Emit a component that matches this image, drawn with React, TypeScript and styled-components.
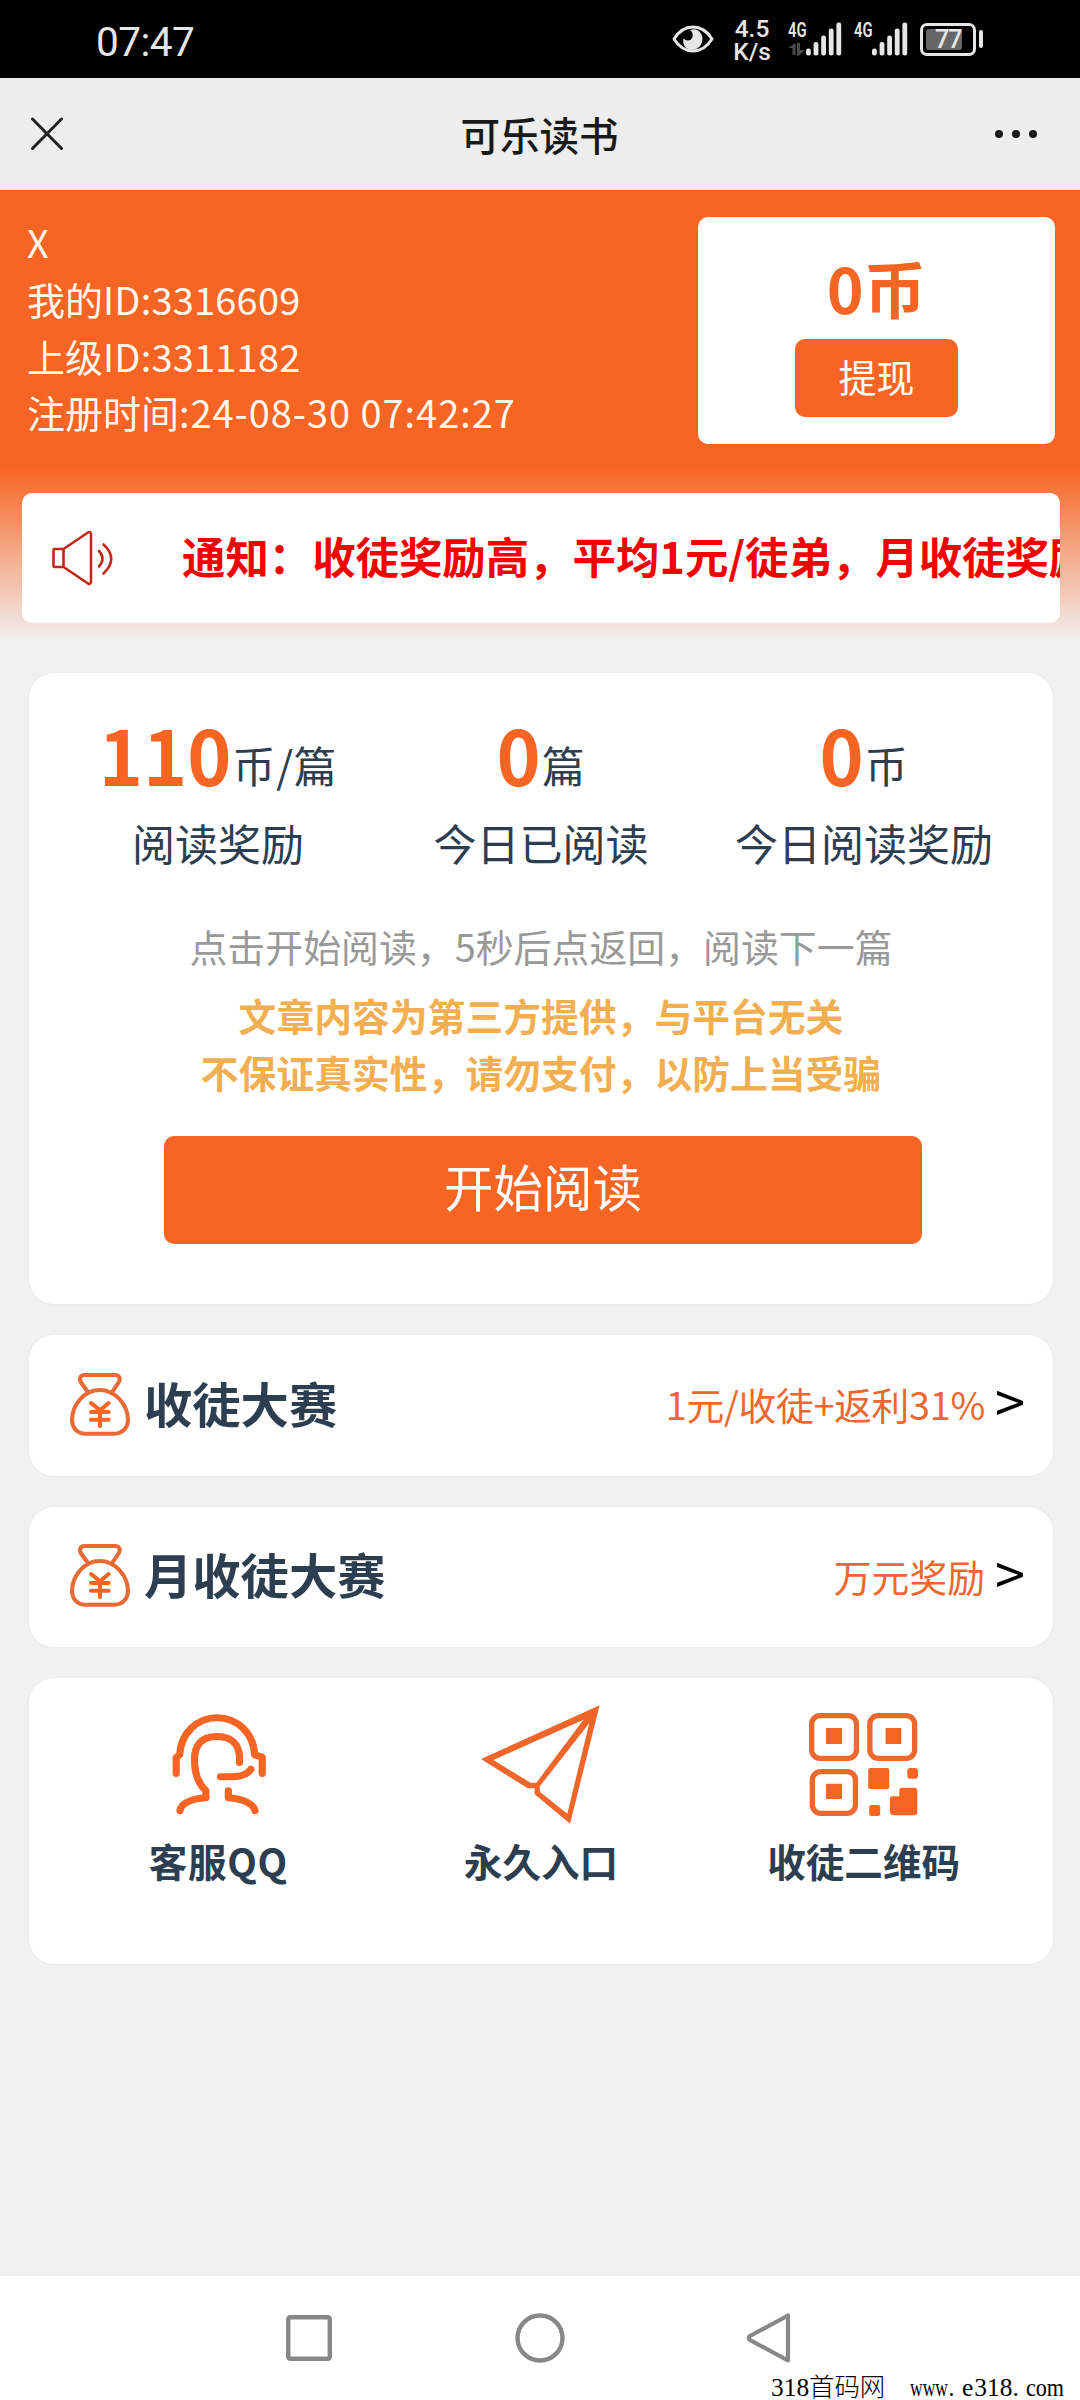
import React from "react";
import styled, { createGlobalStyle } from "styled-components";

const ORANGE = "#f66524";
const NAVY = "#2c3e50";

const GlobalStyle = createGlobalStyle`
  *, *::before, *::after { box-sizing: border-box; }
  body {
    margin: 0;
    background: #f1f1f1;
    font-family: "Noto Sans CJK SC", "Noto Sans", sans-serif;
  }
  svg { flex: none; }
`;

const Phone = styled.div`
  width: 1080px;
  height: 2400px;
  display: flex;
  flex-direction: column;
  overflow: hidden;
  background: #f1f1f1;
`;

/* ---------- status bar ---------- */

const StatusBar = styled.header`
  height: 78px;
  flex: none;
  padding: 0 97px 0 96px;
  display: flex;
  align-items: center;
  justify-content: space-between;
  background: #000;
  color: #e6e6e6;
  font-family: Roboto, "Noto Sans", sans-serif;
`;

const Clock = styled.time`
  font-size: 40.5px;
  font-weight: 400;
  line-height: 48px;
  letter-spacing: -0.5px;
  padding-top: 5px;
`;

const StatusIcons = styled.div`
  display: flex;
  align-items: center;
`;

const NetSpeed = styled.div`
  width: 38px;
  margin: 0 17px 0 19px;
  display: flex;
  flex-direction: column;
  align-items: center;
  font-size: 24.5px;
  font-weight: 500;
  line-height: 23px;
  padding-top: 1px;
`;

const Signal = styled.div`
  display: flex;
  align-items: flex-start;
  width: 54px;
  height: 34px;
  margin-right: 12px;
`;

const NetType = styled.div`
  width: 18px;
  display: flex;
  flex-direction: column;
  gap: 5px;
`;

const NetLabel = styled.span`
  display: block;
  width: 26px;
  font-size: 20px;
  font-weight: 600;
  line-height: 16px;
  transform: scaleX(0.74);
  transform-origin: left;
`;

const Battery = styled.div`
  width: 56px;
  height: 33px;
  padding: 3px;
  border: 3px solid #e6e6e6;
  border-radius: 7px;
`;

const BatteryLevel = styled.div`
  width: 36px;
  height: 21px;
  padding-left: 9px;
  border-radius: 3px;
  background: #666;
  font-size: 25px;
  font-weight: 500;
  line-height: 22px;
  letter-spacing: -1px;
`;

const BatteryTip = styled.div`
  width: 4px;
  height: 18px;
  margin-left: 3px;
  border-radius: 2px;
  background: #e6e6e6;
`;

/* ---------- title bar ---------- */

const TitleBar = styled.nav`
  height: 112px;
  flex: none;
  padding: 0 43px 0 30px;
  display: grid;
  grid-template-columns: 1fr auto 1fr;
  align-items: center;
  background: #ededed;
  color: #191919;
`;

const Title = styled.h1`
  margin: 0;
  font-size: 39.5px;
  font-weight: 500;
  line-height: 60px;
  padding-left: 12px;
`;

const Dots = styled.div`
  display: flex;
  justify-content: flex-end;
  gap: 8.5px;
`;

const Dot = styled.i`
  width: 8.5px;
  height: 8.5px;
  border-radius: 50%;
  background: #191919;
`;

/* ---------- orange header ---------- */

const Hero = styled.section`
  height: 483px;
  flex: none;
  padding-top: 27px;
  background: linear-gradient(${ORANGE} 0, ${ORANGE} 278px, #f1f1f1 452px);
`;

const Profile = styled.div`
  height: 227px;
  padding: 0 25px 0 27px;
  display: flex;
  justify-content: space-between;
`;

const UserInfo = styled.div`
  margin-top: -3px;
  color: #fff8ee;
  font-size: 38px;
  line-height: 56.8px;
  white-space: nowrap;
`;

const InfoLine = styled.div<{ $spacing?: number }>`
  span { letter-spacing: ${(p) => p.$spacing ?? 0}px; }
`;

const BalanceCard = styled.div`
  width: 357px;
  height: 227px;
  padding-top: 35px;
  display: flex;
  flex-direction: column;
  align-items: center;
  border-radius: 10px;
  background: #fff;
`;

const Balance = styled.div`
  height: 87px;
  font-size: 62.5px;
  font-weight: 700;
  line-height: 70px;
  color: ${ORANGE};
`;

const WithdrawButton = styled.button`
  width: 163px;
  height: 78px;
  padding: 0 0 5px;
  border: 0;
  border-radius: 10px;
  background: ${ORANGE};
  color: #fff;
  font: 400 38px/72px "Noto Sans CJK SC", sans-serif;
`;

const Notice = styled.div`
  width: 1038px;
  height: 130px;
  margin: 49px 0 0 22px;
  padding-left: 29px;
  display: flex;
  align-items: center;
  overflow: hidden;
  border-radius: 10px;
  background: #fff;
`;

const NoticeText = styled.p`
  margin: 0 0 6px 68px;
  color: #f40000;
  font-size: 43.4px;
  font-weight: 700;
  line-height: 60px;
  white-space: nowrap;
`;

/* ---------- cards ---------- */

const Content = styled.main`
  flex: 1;
  padding: 0 27px 0 29px;
  display: flex;
  flex-direction: column;
  gap: 31px;
`;

const Card = styled.section<{ $height: number }>`
  height: ${(p) => p.$height}px;
  flex: none;
  border-radius: 25px;
  background: #fff;
  box-shadow: 0 0 3px rgba(0, 0, 0, 0.06);
`;

const ReadCard = styled(Card)`
  padding-top: 34px;
  display: flex;
  flex-direction: column;
  align-items: center;
`;

const Stats = styled.div`
  width: 969px;
  height: 209px;
  display: grid;
  grid-template-columns: repeat(3, 1fr);
  color: ${NAVY};
  font-size: 43px;
  text-align: center;
`;

const StatValue = styled.div`
  height: 105px;
  line-height: 94px;
  white-space: nowrap;
`;

const StatNumber = styled.b`
  font-size: 75px;
  font-weight: 700;
  color: ${ORANGE};
`;

const StatUnit = styled.span`
  margin-left: 1px;
  line-height: 40px;
  letter-spacing: 0.6px;
  vertical-align: 3px;
`;

const StatLabel = styled.div`
  line-height: 60px;
`;

const Hint = styled.p`
  margin: 0 0 10px;
  font-size: 37.9px;
  line-height: 60px;
  color: #999;
`;

const Warning = styled.p`
  margin: 0;
  font-size: 37.8px;
  font-weight: 700;
  line-height: 57px;
  color: #f2af52;
  text-align: center;
`;

const StartButton = styled.button`
  width: 758px;
  height: 108px;
  margin: 36px 0 0 4px;
  padding: 0 0 8px;
  border: 0;
  border-radius: 10px;
  background: ${ORANGE};
  color: #fff;
  font: 400 49.5px/100px "Noto Sans CJK SC", sans-serif;
`;

const ContestCard = styled(Card)`
  padding: 0 28px 2px 41px;
  display: flex;
  align-items: center;
`;

const ContestTitle = styled.h2`
  flex: 1;
  margin: 0 0 5px 14px;
  font-size: 48.3px;
  font-weight: 700;
  line-height: 60px;
  color: ${NAVY};
`;

const Reward = styled.span<{ $spacing: number }>`
  font-size: 37.8px;
  line-height: 60px;
  letter-spacing: ${(p) => p.$spacing}px;
  color: #ec682f;
`;

const Chevron = styled.span`
  width: 30px;
  margin: 0 0 8px 10px;
  font-size: 54px;
  font-weight: 400;
  line-height: 60px;
  color: #000;
`;

const LinksCard = styled(Card)`
  padding: 20px 28px 0;
  display: grid;
  grid-template-columns: repeat(3, 1fr);
`;

const LinkItem = styled.a`
  display: flex;
  flex-direction: column;
  align-items: center;
  color: ${NAVY};
  font-size: 38.6px;
  font-weight: 700;
  line-height: 60px;
`;

const LinkIcon = styled.div`
  height: 132px;
  display: flex;
  align-items: center;
`;

const LinkLabel = styled.span<{ $spacing: number }>`
  letter-spacing: ${(p) => p.$spacing}px;
`;

/* ---------- navigation bar ---------- */

const NavBar = styled.footer`
  height: 124px;
  flex: none;
  padding-top: 37px;
  background: #fff;
`;

const NavButtons = styled.div`
  height: 50px;
  padding: 0 289px 0 286px;
  display: flex;
  align-items: center;
  justify-content: space-between;
`;

const Watermark = styled.div`
  height: 37px;
  padding: 10px 0 0 771px;
  display: flex;
  color: #000;
  font-family: "Liberation Serif", "Noto Sans CJK SC", serif;
  font-size: 25.4px;
  font-weight: 300;
  line-height: 28px;
  white-space: pre;
`;

const Site = styled.span`
  display: flex;
  margin-left: 25px;
`;

const Cell = styled.span<{ $width: number; $scale?: number }>`
  display: block;
  width: ${(p) => p.$width}px;
  transform: scaleX(${(p) => p.$scale ?? 1});
  transform-origin: left;
`;

/* ---------- drawings ---------- */

const EyeIcon = () => (
  <svg width="42" height="28" viewBox="0 0 42 28" fill="none">
    <path d="M2 14C12-2 30-2 40 14C30 30 12 30 2 14Z" stroke="#e6e6e6" strokeWidth="3" strokeLinejoin="round" />
    <path d="M18 5C25 2 31 8 30.500 14.500C30 22 24 25 20 25C14 25 10 20 11.500 13C13 16 19 17 20.500 12C21.300 9 20 6.500 18 5Z" fill="#e6e6e6" />
  </svg>
);

const DataArrows = () => (
  <svg width="17" height="13" viewBox="0 0 17 13" fill="#4a4a4a">
    <path d="M4.500 12V5H0L7.500 0V12ZM9 0H12V7L17 7L11 12.500H9Z" />
  </svg>
);

const SignalBars = () => (
  <svg width="36" height="34" viewBox="0 0 36 34" fill="#e6e6e6">
    {[7, 13.5, 20, 27, 33].map((h, i) => (
      <rect key={h} x={i * 7.6} y={33.5 - h} width="4.8" height={h} rx="2.2" />
    ))}
  </svg>
);

const CloseIcon = () => (
  <svg width="34" height="34" viewBox="0 0 34 34" stroke="#222" strokeWidth="3" strokeLinecap="round">
    <path d="M2.500 2L31.500 31.500M31.500 2L2.500 31.500" />
  </svg>
);

const SpeakerIcon = () => (
  <svg width="63" height="56" viewBox="51 529 63 56" fill="none" stroke="#c0281c" strokeWidth="2.6" strokeLinecap="round" strokeLinejoin="round">
    <rect x="53.5" y="548" width="10" height="18" rx="1" />
    <path d="M63.500 548L88 531.500Q91 530 91 533.500V580Q91 584 88 582.500L63.500 566" />
    <path d="M99 550Q106 557.500 99 565.500M103.500 543.500Q119 557.500 103.500 572.500" />
  </svg>
);

const BagIcon = () => (
  <svg width="60" height="63" viewBox="202 189 174 189" preserveAspectRatio="none" fill="none" stroke="#e96a35" strokeWidth="12" strokeLinecap="round" strokeLinejoin="round">
    <path d="M252 243L235 219C227 206 232 195 244 195H333C346 195 350 207 342 219L326 243" />
    <path d="M288 240C333 240 370 284 370 330C370 355 352 371 332 371H246C224 371 208 354 208 330C208 284 244 240 288 240Z" />
    <path d="M263 279L289 301L314 279M263 306H314M263 329H314M289 303V348" stroke="#f66524" />
  </svg>
);

const HeadsetIcon = () => (
  <svg width="94" height="100" viewBox="149 138 272 301" preserveAspectRatio="none" overflow="visible" fill="none" stroke={ORANGE} strokeWidth="21" strokeLinecap="round" strokeLinejoin="round">
    <path d="M164 317V269L174 261C178 195 225 149 282 149C340 149 388 195 391 261L413 268V317" />
    <path d="M347 284C350 240 335 206 282 206C230 206 217 240 217 275C217 325 230 350 250 369V390C215 392 178 405 175 429" />
    <path d="M292 327H320C350 327 372 318 380 304M315 369V390C355 392 388 408 392 429" />
  </svg>
);

const PlaneIcon = () => (
  <svg width="119" height="119" viewBox="1048 104 346 357" preserveAspectRatio="none" fill="#f0652a" fillRule="evenodd">
    <path d="M1048 266L1393 105L1307 460L1204 372V354H1184ZM1084 269L1192 337H1209L1346 148ZM1363 158L1219 348V364L1299 430Z" />
  </svg>
);

const QrIcon = () => (
  <svg width="109" height="103" viewBox="450 126 326 309" preserveAspectRatio="none" fill={ORANGE}>
    <g fill="none" stroke="#ec682f" strokeWidth="16">
      <rect x="458" y="134" width="134" height="128" rx="25" />
      <rect x="632" y="134" width="134" height="128" rx="25" />
      <rect x="460" y="302" width="129" height="125" rx="25" />
    </g>
    <path d="M501 171H549V219H501ZM679 171H726V219H679ZM501 338H549V384H501Z" />
    <rect x="627" y="291" width="63" height="63" rx="6" />
    <rect x="744" y="291" width="32" height="32" rx="9" />
    <rect x="630" y="402" width="33" height="33" rx="7" />
    <path d="M728 350H765Q774 350 774 359V424Q774 433 765 433H704Q692 433 692 421V384Q692 376 700 376H720V358Q720 350 728 350Z" />
  </svg>
);

const RecentIcon = () => (
  <svg width="46" height="46" viewBox="0 0 46 46" fill="none" stroke="#888" strokeWidth="4.4">
    <rect x="2.2" y="2.2" width="41.6" height="41.6" rx="2" />
  </svg>
);

const HomeIcon = () => (
  <svg width="50" height="50" viewBox="-1 0 50 50" overflow="visible" fill="none" stroke="#888" strokeWidth="4.4">
    <circle cx="25" cy="25" r="22.5" />
  </svg>
);

const BackIcon = () => (
  <svg width="45" height="50" viewBox="0 0 45 50" fill="none" stroke="#888" strokeWidth="4.2" strokeLinejoin="round">
    <path d="M42 2.500V47.500L4 27Q1.500 25 4 23Z" />
  </svg>
);

/* ---------- page ---------- */

const stats = [
  { value: "110", unit: "币/篇", label: "阅读奖励" },
  { value: "0", unit: "篇", label: "今日已阅读" },
  { value: "0", unit: "币", label: "今日阅读奖励" },
];

const contests = [
  { title: "收徒大赛", reward: "1元/收徒+返利31%", spacing: -0.3 },
  { title: "月收徒大赛", reward: "万元奖励", spacing: 0 },
];

const links = [
  { icon: <HeadsetIcon />, label: "客服QQ", spacing: 0.6 },
  { icon: <PlaneIcon />, label: "永久入口", spacing: 0 },
  { icon: <QrIcon />, label: "收徒二维码", spacing: 0 },
];

export default function App() {
  return (
    <Phone>
      <GlobalStyle />
      <StatusBar>
        <Clock>07:47</Clock>
        <StatusIcons>
          <EyeIcon />
          <NetSpeed>
            <span>4.5</span>
            <span>K/s</span>
          </NetSpeed>
          {[true, false].map((active) => (
            <Signal key={String(active)}>
              <NetType>
                <NetLabel>4G</NetLabel>
                {active && <DataArrows />}
              </NetType>
              <SignalBars />
            </Signal>
          ))}
          <Battery>
            <BatteryLevel>77</BatteryLevel>
          </Battery>
          <BatteryTip />
        </StatusIcons>
      </StatusBar>

      <TitleBar>
        <CloseIcon />
        <Title>可乐读书</Title>
        <Dots>
          <Dot />
          <Dot />
          <Dot />
        </Dots>
      </TitleBar>

      <Hero>
        <Profile>
          <UserInfo>
            <InfoLine>X</InfoLine>
            <InfoLine $spacing={0.2}>我的<span>ID:3316609</span></InfoLine>
            <InfoLine $spacing={0.2}>上级<span>ID:3311182</span></InfoLine>
            <InfoLine $spacing={0.95}>注册时间<span>:24-08-30 07:42:27</span></InfoLine>
          </UserInfo>
          <BalanceCard>
            <Balance>0币</Balance>
            <WithdrawButton>提现</WithdrawButton>
          </BalanceCard>
        </Profile>
        <Notice>
          <SpeakerIcon />
          <NoticeText>通知：收徒奖励高，平均1元/徒弟，月收徒奖励</NoticeText>
        </Notice>
      </Hero>

      <Content>
        <ReadCard $height={631}>
          <Stats>
            {stats.map((s) => (
              <div key={s.label}>
                <StatValue>
                  <StatNumber>{s.value}</StatNumber>
                  <StatUnit>{s.unit}</StatUnit>
                </StatValue>
                <StatLabel>{s.label}</StatLabel>
              </div>
            ))}
          </Stats>
          <Hint>点击开始阅读，5秒后点返回，阅读下一篇</Hint>
          <Warning>
            文章内容为第三方提供，与平台无关
            <br />
            不保证真实性，请勿支付，以防上当受骗
          </Warning>
          <StartButton>开始阅读</StartButton>
        </ReadCard>

        {contests.map((c) => (
          <ContestCard key={c.title} $height={140.5}>
            <BagIcon />
            <ContestTitle>{c.title}</ContestTitle>
            <Reward $spacing={c.spacing}>{c.reward}</Reward>
            <Chevron>&gt;</Chevron>
          </ContestCard>
        ))}

        <LinksCard $height={286}>
          {links.map((l) => (
            <LinkItem key={l.label}>
              <LinkIcon>{l.icon}</LinkIcon>
              <LinkLabel $spacing={l.spacing}>{l.label}</LinkLabel>
            </LinkItem>
          ))}
        </LinksCard>
      </Content>

      <NavBar>
        <NavButtons>
          <RecentIcon />
          <HomeIcon />
          <BackIcon />
        </NavButtons>
        <Watermark>
          318首码网
          <Site>
            <Cell $width={38.1} $scale={0.69}>www</Cell>
            <Cell $width={13.7}>.</Cell>
            <Cell $width={12.3}>e</Cell>
            <Cell $width={38.1}>318</Cell>
            <Cell $width={13.7}>.</Cell>
            <Cell $width={38.1} $scale={0.87}>com</Cell>
          </Site>
        </Watermark>
      </NavBar>
    </Phone>
  );
}
